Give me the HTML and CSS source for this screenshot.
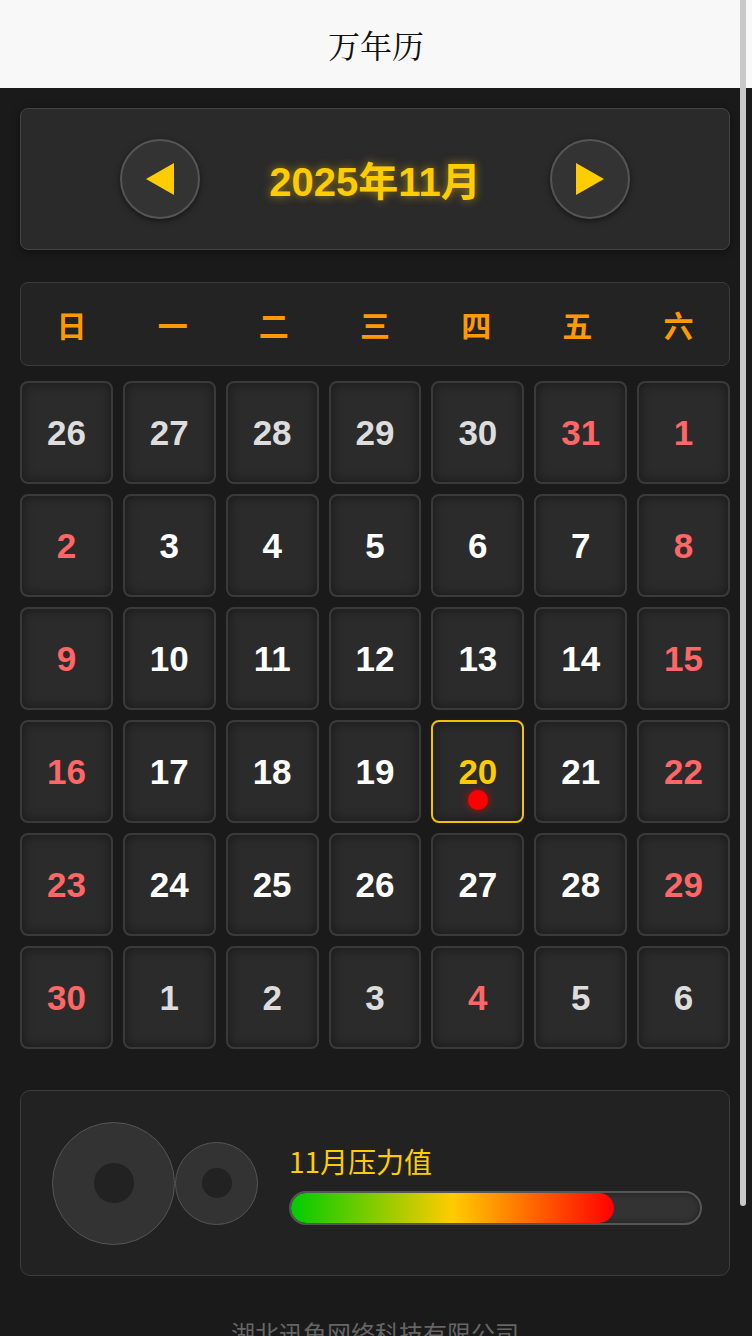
FILE: index.html
```html
<!DOCTYPE html>
<html lang="zh-CN">
<head>
<meta charset="utf-8">
<title>万年历</title>
<link rel="stylesheet" href="styles.css">
</head>
<body>
<header class="top-bar"><h1 class="page-title">万年历</h1></header>
<main class="content">
  <section class="nav-card">
    <button class="nav-btn" aria-label="上一月">
      <svg width="80" height="80" viewBox="0 0 80 80"><polygon points="54,24 54,56 26,40" fill="#ffcc00"/></svg>
    </button>
    <div class="month-title">2025年11月</div>
    <button class="nav-btn" aria-label="下一月">
      <svg width="80" height="80" viewBox="0 0 80 80"><polygon points="26,24 26,56 54,40" fill="#ffcc00"/></svg>
    </button>
  </section>

  <section class="week-card">
    <span>日</span><span>一</span><span>二</span><span>三</span><span>四</span><span>五</span><span>六</span>
  </section>

  <section class="day-grid">
    <div class="day other">26</div><div class="day other">27</div><div class="day other">28</div><div class="day other">29</div><div class="day other">30</div><div class="day other red">31</div><div class="day red">1</div>
    <div class="day red">2</div><div class="day">3</div><div class="day">4</div><div class="day">5</div><div class="day">6</div><div class="day">7</div><div class="day red">8</div>
    <div class="day red">9</div><div class="day">10</div><div class="day">11</div><div class="day">12</div><div class="day">13</div><div class="day">14</div><div class="day red">15</div>
    <div class="day red">16</div><div class="day">17</div><div class="day">18</div><div class="day">19</div><div class="day today">20<span class="dot"></span></div><div class="day">21</div><div class="day red">22</div>
    <div class="day red">23</div><div class="day">24</div><div class="day">25</div><div class="day">26</div><div class="day">27</div><div class="day">28</div><div class="day red">29</div>
    <div class="day red">30</div><div class="day other">1</div><div class="day other">2</div><div class="day other">3</div><div class="day other red">4</div><div class="day other">5</div><div class="day other">6</div>
  </section>

  <section class="pressure-card">
    <div class="gears">
      <div class="gear gear-big"><div class="hole hole-big"></div></div>
      <div class="gear gear-small"><div class="hole hole-small"></div></div>
    </div>
    <div class="pressure-info">
      <div class="pressure-label">11月压力值</div>
      <div class="bar"><div class="bar-fill" style="width: 79%"></div></div>
    </div>
  </section>

  <footer class="footer">湖北迅鱼网络科技有限公司</footer>
</main>
<div class="scroll-thumb"></div>
</body>
</html>
```

FILE: styles.css
```css
* { box-sizing: border-box; }
html, body { margin: 0; padding: 0; }
body {
  background: #1a1a1a;
  font-family: "Liberation Sans", "Noto Sans CJK SC", sans-serif;
}
.top-bar {
  height: 88px;
  background: #f8f8f8;
  display: flex;
  align-items: center;
  justify-content: center;
}
.page-title {
  margin: 0;
  font-family: "Noto Serif CJK SC", "AR PL UMing CN", "AR PL SungtiL GB", serif;
  font-weight: normal;
  font-size: 32px;
  color: #111;
}
.content {
  padding: 20px 22px 130px 20px;
}
.nav-card {
  height: 142px;
  background: #2a2a2a;
  border: 1px solid #444;
  border-radius: 8px;
  display: flex;
  align-items: center;
  justify-content: space-between;
  padding: 0 99px;
  margin-bottom: 32px;
  box-shadow: 0 2px 8px rgba(0,0,0,0.4);
}
.nav-btn {
  width: 80px;
  height: 80px;
  padding: 0;
  border-radius: 50%;
  background: #333;
  border: 2px solid #555;
  box-shadow: 0 2px 6px rgba(0,0,0,0.5);
  display: flex;
  align-items: center;
  justify-content: center;
  overflow: hidden;
}
.nav-btn svg { display: block; flex: none; }
.month-title {
  font-size: 40px;
  font-weight: bold;
  color: #ffcc00;
  text-shadow: 0 0 10px rgba(255, 204, 0, 0.55);
}
.week-card {
  height: 84px;
  background: #232323;
  border: 1px solid #3c3c3c;
  border-radius: 8px;
  display: grid;
  grid-template-columns: repeat(7, 1fr);
  align-items: center;
  margin-bottom: 15px;
}
.week-card span {
  text-align: center;
  font-family: "Noto Sans CJK SC", sans-serif;
  font-weight: bold;
  font-size: 30px;
  color: #ff9900;
  line-height: 1;
}
.day-grid {
  display: grid;
  grid-template-columns: repeat(7, 1fr);
  grid-auto-rows: 103px;
  gap: 10px;
}
.day {
  position: relative;
  background: #2b2b2b;
  border: 2px solid #3a3a3a;
  border-radius: 8px;
  box-shadow: inset 0 0 12px rgba(0,0,0,0.45);
  display: flex;
  align-items: center;
  justify-content: center;
  font-size: 35px;
  font-weight: bold;
  color: #ffffff;
}
.day.other { color: #dddddd; }
.day.red { color: #ff6666; }
.day.today {
  border-color: #f2c200;
  color: #ffcc00;
}
.dot {
  position: absolute;
  left: 50%;
  bottom: 11px;
  width: 20px;
  height: 20px;
  margin-left: -10px;
  border-radius: 50%;
  background: #ff0000;
  box-shadow: 0 0 8px rgba(255, 0, 0, 0.7);
}
.pressure-card {
  margin-top: 41px;
  height: 186px;
  background: #222;
  border: 1px solid #3c3c3c;
  border-radius: 10px;
  display: flex;
  align-items: center;
  padding: 0 27px 0 31px;
}
.gears {
  display: flex;
  align-items: center;
  margin-right: 31px;
}
.gear {
  background: #333;
  border: 1px solid #555;
  border-radius: 50%;
  display: flex;
  align-items: center;
  justify-content: center;
}
.gear-big { width: 123px; height: 123px; }
.gear-small { width: 83px; height: 83px; }
.hole { background: #222; border-radius: 50%; }
.hole-big { width: 40px; height: 40px; }
.hole-small { width: 30px; height: 30px; }
.pressure-info { flex: 1; }
.pressure-label {
  font-family: "Noto Sans CJK SC", sans-serif;
  font-size: 28px;
  color: #ffcc00;
  line-height: 40px;
  margin-bottom: 10px;
}
.bar {
  height: 34px;
  border: 2px solid #555;
  border-radius: 17px;
  background: #333;
  box-shadow: inset 0 0 6px rgba(0,0,0,0.4);
  overflow: hidden;
}
.bar-fill {
  height: 100%;
  border-radius: 15px;
  background: linear-gradient(to right, #00cc00 0%, #ffcc00 50%, #ff0000 100%);
}
.footer {
  margin-top: 40px;
  text-align: center;
  font-family: "Noto Sans CJK SC", sans-serif;
  font-size: 24px;
  line-height: 34px;
  color: #666;
}
.scroll-thumb {
  position: fixed;
  top: 0;
  right: 6px;
  width: 6px;
  height: 1206px;
  border-radius: 0 0 3px 3px;
  background: #c8c8c8;
}
```
